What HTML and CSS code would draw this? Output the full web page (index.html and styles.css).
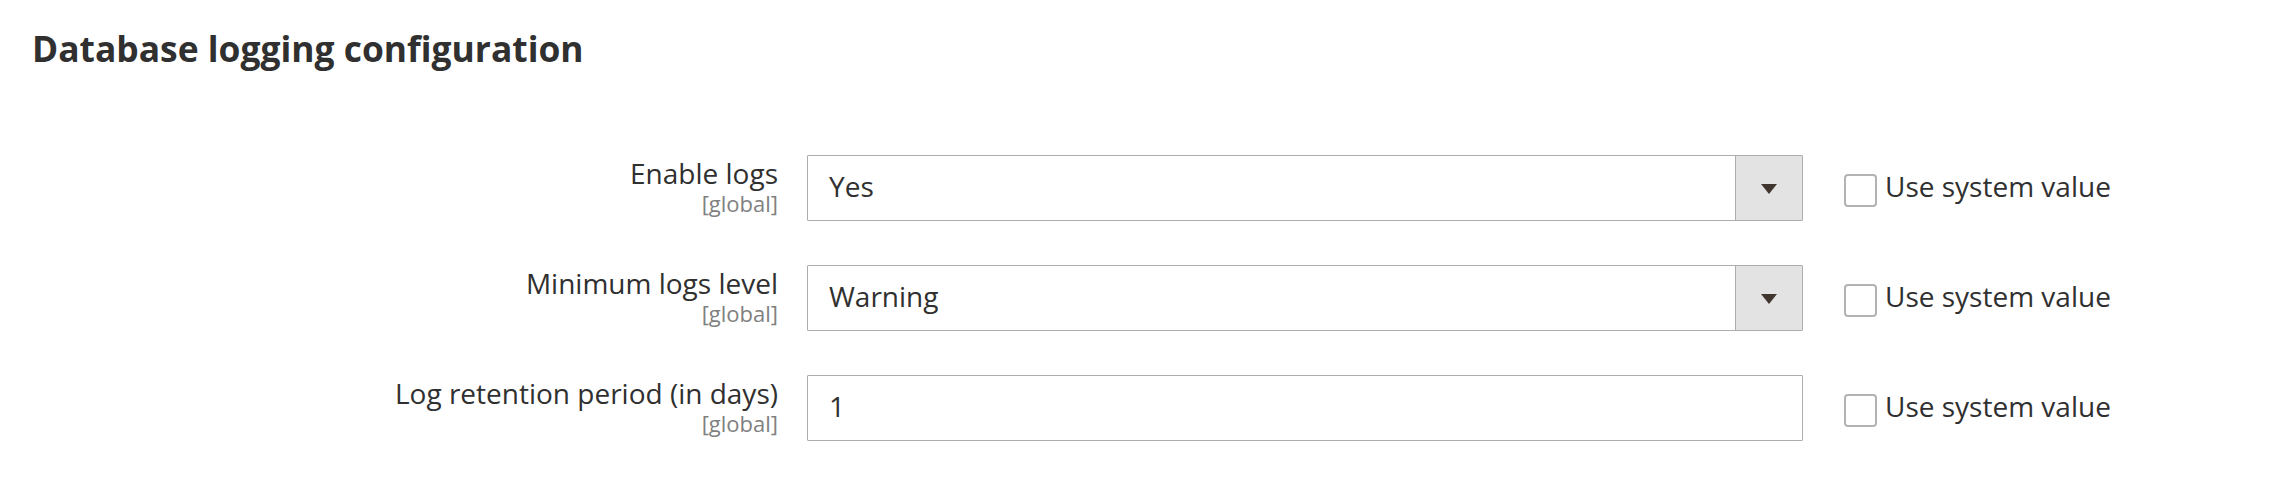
FILE: index.html
```html
<!DOCTYPE html>
<html lang="en">
<head>
<meta charset="utf-8">
<title>Database logging configuration</title>
<link rel="stylesheet" href="styles.css">
</head>
<body>
<div class="page">
  <h2 class="section-title">Database logging configuration</h2>
  <div class="fields">
    <div class="field">
      <div class="field-label">
        <span class="label-text">Enable logs</span>
        <span class="scope">[global]</span>
      </div>
      <div class="control select">
        <span class="value">Yes</span>
        <span class="select-btn"><span class="arrow"></span></span>
      </div>
      <label class="use-default">
        <span class="checkbox"></span>
        <span class="use-text">Use system value</span>
      </label>
    </div>
    <div class="field">
      <div class="field-label">
        <span class="label-text">Minimum logs level</span>
        <span class="scope">[global]</span>
      </div>
      <div class="control select">
        <span class="value">Warning</span>
        <span class="select-btn"><span class="arrow"></span></span>
      </div>
      <label class="use-default">
        <span class="checkbox"></span>
        <span class="use-text">Use system value</span>
      </label>
    </div>
    <div class="field">
      <div class="field-label">
        <span class="label-text">Log retention period (in days)</span>
        <span class="scope">[global]</span>
      </div>
      <div class="control">
        <span class="value">1</span>
      </div>
      <label class="use-default">
        <span class="checkbox"></span>
        <span class="use-text">Use system value</span>
      </label>
    </div>
  </div>
</div>
</body>
</html>
```

FILE: styles.css
```css
html, body {
  margin: 0;
  padding: 0;
  background: #ffffff;
}

body {
  font-family: "Open Sans", "Liberation Sans", sans-serif;
  color: #303030;
}

.page {
  padding: 23px 0 0 0;
}

.section-title {
  margin: 0 0 0 32px;
  font-size: 35.4px;
  font-weight: 700;
  line-height: 50px;
  color: #303030;
}

.fields {
  margin-top: 82px;
  display: flex;
  flex-direction: column;
  gap: 44px;
}

.field {
  display: flex;
  align-items: flex-start;
}

.field-label {
  width: 778px;
  padding-top: 4px;
  display: flex;
  flex-direction: column;
  align-items: flex-end;
  text-align: right;
}

.label-text {
  font-size: 28px;
  line-height: 28px;
  color: #303030;
}

.scope {
  font-size: 22px;
  line-height: 33px;
  color: #808080;
}

.control {
  margin-left: 29px;
  width: 996px;
  height: 66px;
  box-sizing: border-box;
  border: 1px solid #adadad;
  border-radius: 1px;
  background: #ffffff;
  display: flex;
  align-items: flex-start;
}

.value {
  flex: 1;
  padding: 13px 0 0 21px;
  font-size: 28px;
  line-height: 34px;
  color: #303030;
}

.select-btn {
  width: 67px;
  height: 100%;
  box-sizing: border-box;
  border-left: 1px solid #adadad;
  background: #e3e3e3;
  display: flex;
  align-items: center;
  justify-content: center;
}

.arrow {
  width: 0;
  height: 0;
  border-left: 8px solid transparent;
  border-right: 8px solid transparent;
  border-top: 10px solid #41362f;
  margin-top: 2px;
}

.use-default {
  margin-left: 41px;
  display: flex;
  align-items: flex-start;
}

.checkbox {
  margin-top: 19px;
  width: 33px;
  height: 33px;
  box-sizing: border-box;
  border: 2px solid #b3b3b3;
  border-radius: 4px;
  background: #ffffff;
}

.use-text {
  margin-left: 8px;
  padding-top: 14px;
  font-size: 28px;
  line-height: 34px;
  color: #303030;
}
```
